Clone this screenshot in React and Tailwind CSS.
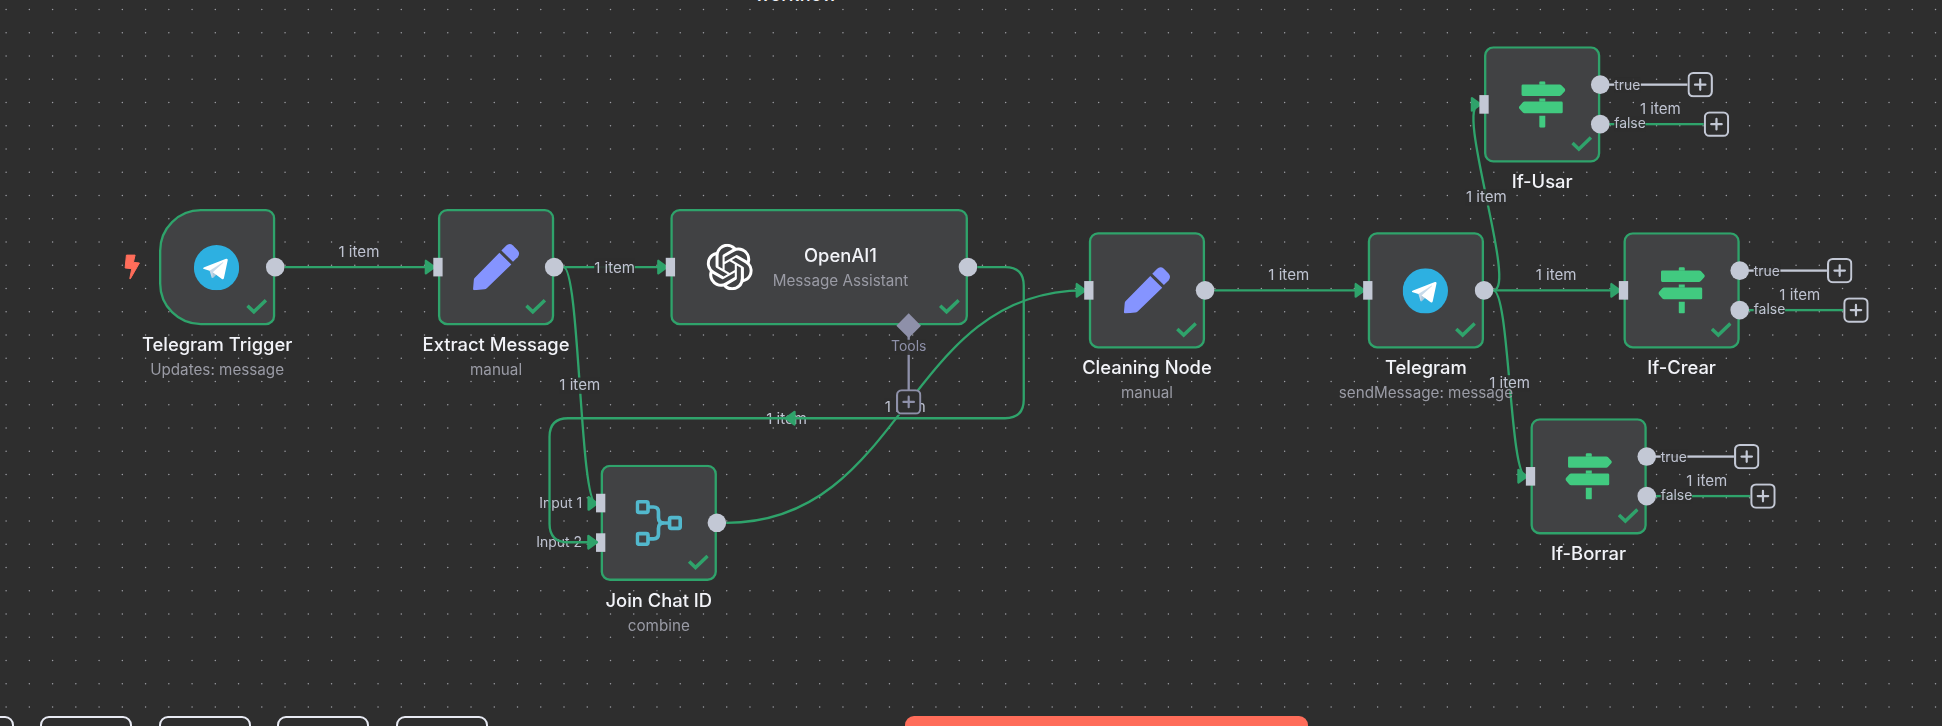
import React from "react";
import { SiOpenai } from "react-icons/si";

const GREEN = "#2fa36b";
const HANDLE = "#c3c8d5";
const MUTED = "#8e90a9";

const bezier = (sx, sy, tx, ty) => {
  const d = tx - sx;
  const o = d >= 0 ? d / 2 : 6.25 * Math.sqrt(-d);
  return `M${sx} ${sy}C${sx + o} ${sy} ${tx - o} ${ty} ${tx} ${ty}`;
};

const EDGES = [
  [108, 50, 236, 50],
  [348, 50, 436, 50],
  [348, 50, 376, 253.3],
  [488, 270, 796, 70],
  [908, 70, 1036, 70],
  [1148, 70, 1136, -90],
  [1148, 70, 1256, 70],
  [1148, 70, 1176, 230],
];

const LOOP =
  "M704 50H728Q744 50 744 66V164Q744 180 728 180H352Q336 180 336 196V270.7Q336 286.7 352 286.7H374";

function Dots() {
  const rows = Array.from({ length: 32 }, (_, i) => 9.6 + i * 23.246);
  return (
    <svg className="absolute inset-0 h-full w-full" fill="none">
      {rows.map((y) => (
        <path
          key={y}
          d={`M6.1 ${y}H1942`}
          stroke="#9c9da3"
          strokeWidth="1.5"
          strokeLinecap="round"
          strokeDasharray="0 23.246"
        />
      ))}
    </svg>
  );
}

function Arrow({ x, y, flip }) {
  return (
    <path
      d="M-6.8 -5.4V5.4L0.6 0Z"
      transform={`translate(${x} ${y})${flip ? " scale(-1 1)" : ""}`}
      fill={GREEN}
      stroke={GREEN}
      strokeWidth="2"
      strokeLinejoin="round"
    />
  );
}

function Edges() {
  return (
    <svg className="absolute left-0 top-0 overflow-visible" width="1" height="1" fill="none">
      <g stroke={GREEN} strokeWidth="2">
        {EDGES.map((e) => (
          <path key={e.join()} d={bezier(...e)} />
        ))}
      </g>
      {EDGES.map((e) => (
        <Arrow key={e.join()} x={e[2] + 0.4} y={e[3]} />
      ))}
    </svg>
  );
}

function LoopEdge() {
  return (
    <svg className="absolute left-0 top-0 z-20 overflow-visible" width="1" height="1" fill="none">
      <path d={LOOP} stroke={GREEN} strokeWidth="2" />
      <Arrow x={540} y={180} flip />
      <Arrow x={376.2} y={286.7} />
    </svg>
  );
}

function EdgeLabel({ x, y, solid }) {
  return (
    <div
      className={`absolute flex h-[14px] -translate-x-1/2 -translate-y-1/2 items-center whitespace-nowrap text-[13px] leading-none text-[#bfc3d1] ${solid ? "bg-[#2e2e2e]/90" : ""}`}
      style={{ left: x, top: y }}
    >
      1 item
    </div>
  );
}

function Telegram() {
  return (
    <svg viewBox="0 0 240 240" className="mr-[1px] size-[39px]">
      <circle cx="120" cy="120" r="120" fill="#2db0e1" />
      <path fill="#c8daea" d="M98 175c-3.888 0-3.227-1.468-4.568-5.17L82 132.207 170 80" />
      <path fill="#a9c9dd" d="M98 175c3 0 4.325-1.372 6-3l16-15.558-19.958-12.035" />
      <path
        fill="#fff"
        d="M100.04 144.41l48.36 35.729c5.519 3.045 9.501 1.468 10.876-5.123l19.685-92.763c2.015-8.08-3.08-11.746-8.36-9.349l-115.59 44.571c-7.89 3.165-7.843 7.567-1.438 9.528l29.663 9.259 68.673-43.325c3.242-1.966 6.218-.91 3.776 1.258"
      />
    </svg>
  );
}

function Pencil() {
  return (
    <svg viewBox="0 0 140 140" className="size-10" fill="#8594ff">
      <path d="M3 109Q3 105 6 102L80 27L116 62L42 134Q39 137 35 137L4 139.500Q0.500 139.500 0.700 136Z" />
      <path d="M86 20L100 6Q110 -4 121 5L135 19Q144 29 135 40L121 54Z" />
    </svg>
  );
}

function Merge() {
  return (
    <svg viewBox="0 0 140 140" className="size-10" fill="none" stroke="#52b8cd" strokeWidth="11">
      <rect x="5.500" y="6.500" width="32" height="32" rx="5" />
      <rect x="5.500" y="102.500" width="32" height="32" rx="5" />
      <rect x="102.500" y="54.500" width="32" height="32" rx="5" />
      <path d="M40 22.500H54Q69 22.500 69 37V54Q69 70.500 85 70.500H100" />
      <path d="M40 118.500H54Q69 118.500 69 104V87Q69 70.500 85 70.500" />
    </svg>
  );
}

function Signpost() {
  return (
    <svg viewBox="0 0 140 140" className="size-10" fill="#41ca80">
      <path d="M61.500 11V4Q61.500 0.500 65 0.500H76Q79.500 0.500 79.500 4V11Z" />
      <path d="M12 10H123Q126 10 128 12L139 24Q141 27 139 30L128 42Q126 44.500 123 44.500H12Q8 44.500 8 40.500V14Q8 10 12 10Z" />
      <path d="M61.500 62V52.500H79.500V62Z" />
      <path d="M128 61.500H17Q14 61.500 12 63.500L1 76Q-1 79 1 82L12 94.500Q14 97 17 97H128Q132 97 132 93V65.500Q132 61.500 128 61.500Z" />
      <path d="M61.500 104.500H79.500V136.500Q79.500 140 76 140H65Q61.500 140 61.500 136.500Z" />
    </svg>
  );
}

function Check() {
  return (
    <svg
      viewBox="0 0 18 14"
      className="absolute bottom-[7px] right-[5px] h-[14px] w-[18px]"
      fill="none"
      stroke={GREEN}
      strokeWidth="3"
    >
      <path d="M1.100 6.200L6.600 11.500L17 1.500" />
    </svg>
  );
}

function OutputHandle({ top }) {
  return (
    <div
      className="absolute -right-[8px] z-10 size-4 -translate-y-1/2 rounded-full bg-[#c3c8d5]"
      style={{ top }}
    />
  );
}

function InputHandle({ top }) {
  return (
    <div
      className="absolute -left-[4px] z-10 h-4 w-2 -translate-y-1/2 bg-[#c3c8d5]"
      style={{ top }}
    />
  );
}

function PlusBox({ x, y, color }) {
  return (
    <svg
      className="absolute size-[22px] -translate-x-1/2 -translate-y-1/2"
      style={{ left: x, top: y }}
      viewBox="0 0 22 22"
      fill="none"
      stroke={color}
      strokeWidth="2"
    >
      <rect x="1" y="1" width="20" height="20" rx="4" fill="#2e2e2e" strokeWidth="1.800" />
      <path d="M11 6.500V15.500M6.500 11H15.500" strokeLinecap="round" strokeWidth="1.900" />
    </svg>
  );
}

function Branch({ top, name, end, color, item }) {
  return (
    <div className="absolute left-full h-0" style={{ top }}>
      <div
        className="absolute left-0 h-[2px] -translate-y-1/2"
        style={{ width: end - 11, background: color }}
      />
      <span className="absolute left-[12px] flex h-[13px] -translate-y-1/2 items-center bg-[#2e2e2e]/90 text-[12px] leading-none text-[#bfc3d1]">
        {name}
      </span>
      {item && <EdgeLabel x={51.7} y={-13.5} />}
      <PlusBox x={end} y={0} color={HANDLE} />
    </div>
  );
}

function Node({ x, y, name, sub, icon, trigger, inputs = ["50%"], outputs = ["50%"], children }) {
  return (
    <div className="absolute w-[100px]" style={{ left: x, top: y }}>
      <div
        className={`relative flex h-[100px] items-center justify-center border-2 border-[#2fa36b] bg-[#414244] ${trigger ? "rounded-l-[36px] rounded-r-[8px]" : "rounded-[8px]"}`}
      >
        {icon}
        <Check />
      </div>
      <div className="absolute left-0 top-0 h-[100px] w-[100px]">
        {children}
        {!trigger && inputs.map((t) => <InputHandle key={t} top={t} />)}
        {outputs.map((t) => (
          <OutputHandle key={t} top={t} />
        ))}
      </div>
      <div className="-mx-[50px] mt-[6.2px] flex flex-col items-center whitespace-nowrap">
        <div className="text-[15.8px] font-medium leading-[21px] text-[#f2f3f8]">{name}</div>
        <div className="text-[13.1px] leading-[22px] text-[#9a9ba5]">{sub}</div>
      </div>
    </div>
  );
}

function IfNode(props) {
  return (
    <Node {...props} icon={<Signpost />} outputs={["33.3%", "66.5%"]}>
      <Branch top="33.3%" name="true" end={86} color={HANDLE} />
      <Branch top="66.5%" name="false" end={100} color={GREEN} item />
    </Node>
  );
}

function AssistantNode() {
  return (
    <div className="absolute left-[440px] top-0 h-[100px] w-[256px]">
      <div className="relative flex h-full items-center rounded-[8px] border-2 border-[#2fa36b] bg-[#414244] pl-[29px]">
        <SiOpenai className="size-10 text-white" />
        <div className="ml-[17px] flex flex-col items-center whitespace-nowrap pt-[2px]">
          <div className="text-[15.8px] font-medium leading-[21px] text-[#f2f3f8]">OpenAI1</div>
          <div className="text-[13.1px] leading-[21.5px] text-[#9a9ba5]">Message Assistant</div>
        </div>
        <Check />
      </div>
      <InputHandle top="50%" />
      <OutputHandle top="50%" />
      <div className="absolute left-[205px] top-[100px] h-[60px] w-[2px] -translate-x-1/2 bg-[#8e90a9]" />
      <div className="absolute left-[205px] top-[99.5px] size-[14.5px] -translate-x-1/2 -translate-y-1/2 rotate-45 bg-[#8e90a9]" />
      <div className="absolute left-[205px] top-[118.8px] flex h-[13px] -translate-x-1/2 -translate-y-1/2 items-center bg-[#2e2e2e]/90 text-[12px] leading-none text-[#8e90a9]">
        Tools
      </div>
      <PlusBox x={205} y={166} color={MUTED} />
    </div>
  );
}

function Flow() {
  return (
    <div className="absolute left-[158.9px] top-[208.6px] size-0 origin-top-left scale-[1.1623]">
      <Edges />
      <EdgeLabel x={172} y={36.8} />
      <EdgeLabel x={392} y={50} solid />
      <EdgeLabel x={362} y={151.5} solid />
      <EdgeLabel x={540} y={180} />
      <EdgeLabel x={642} y={170} solid />
      <EdgeLabel x={972} y={56.6} />
      <EdgeLabel x={1142} y={-10.2} solid />
      <EdgeLabel x={1202} y={56.6} />
      <EdgeLabel x={1162} y={149.8} solid />

      <svg
        className="absolute -left-[30px] top-[39px] h-[21.5px] w-[14px]"
        viewBox="0 0 47 75"
        fill="#ff6d5a"
        stroke="#ff6d5a"
        strokeWidth="3"
        strokeLinejoin="round"
      >
        <path d="M6 2H32L27 24L45 26L18 73H16L22 43L2 41Z" />
      </svg>

      <Node x={0} y={0} trigger name="Telegram Trigger" sub="Updates: message" icon={<Telegram />} />
      <Node x={240} y={0} name="Extract Message" sub="manual" icon={<Pencil />} />
      <AssistantNode />
      <Node
        x={380}
        y={220}
        name="Join Chat ID"
        sub="combine"
        icon={<Merge />}
        inputs={["33.3%", "66.7%"]}
      >
        <span className="absolute right-[116px] top-[33.3%] -translate-y-1/2 whitespace-nowrap text-[12px] leading-none text-[#bfc3d1]">
          Input 1
        </span>
        <span className="absolute right-[116px] top-[66.7%] -translate-y-1/2 whitespace-nowrap text-[12px] leading-none text-[#bfc3d1]">
          Input 2
        </span>
      </Node>
      <Node x={800} y={20} name="Cleaning Node" sub="manual" icon={<Pencil />} />
      <Node x={1040} y={20} name="Telegram" sub="sendMessage: message" icon={<Telegram />} />
      <IfNode x={1140} y={-140} name="If-Usar" />
      <IfNode x={1260} y={20} name="If-Crear" />
      <IfNode x={1180} y={180} name="If-Borrar" />
      <LoopEdge />
    </div>
  );
}

export default function App() {
  return (
    <div className="relative flex h-[726px] w-[1942px] flex-col overflow-hidden bg-[#2e2e2e] font-['Inter',sans-serif]">
      <Dots />
      <Flow />
      <div className="relative -mt-[20px] ml-[696px] w-[200px] text-center text-[18.6px] font-medium leading-[28px] text-[#f2f3f8]">
        workflow
      </div>
      <div className="relative mt-auto flex h-[10px] items-start">
        <div className="-ml-[78.4px] flex gap-[26.6px]">
          {[0, 1, 2, 3, 4].map((i) => (
            <div
              key={i}
              className="h-[92px] w-[92px] shrink-0 rounded-[9px] border-2 border-[#e8eaf3] bg-[#2e2e2e]"
            />
          ))}
        </div>
        <div className="ml-[416.7px] h-[48px] w-[403px] shrink-0 rounded-[9px] bg-[#ff6d5a]" />
      </div>
    </div>
  );
}
